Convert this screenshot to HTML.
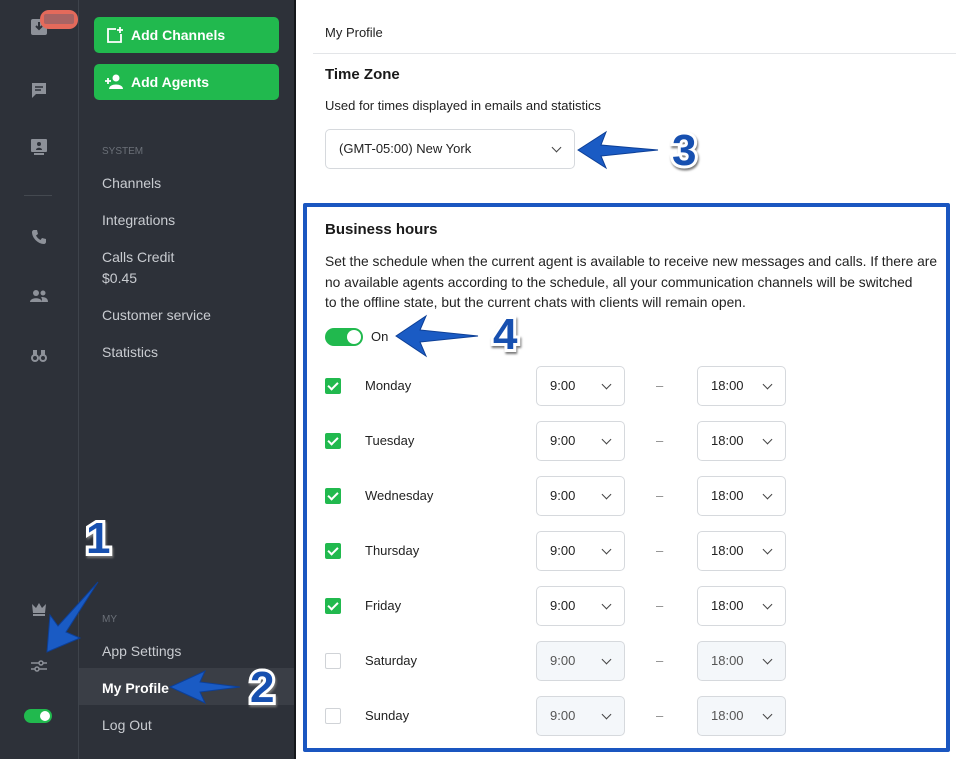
<!DOCTYPE html><html><head><style>
*{box-sizing:border-box;margin:0;padding:0}
body{width:956px;height:759px;overflow:hidden;position:relative;font-family:"Liberation Sans",sans-serif;background:#fff}
.rail{position:absolute;left:0;top:0;width:79px;height:759px;background:#2d3139;border-right:1px solid #3e434b}
.menu{position:absolute;left:79px;top:0;width:217px;height:759px;background:#2d3139;border-right:2px solid #15171b}
.btn{position:absolute;left:15px;width:185px;height:36px;background:#21b94e;border-radius:5px;color:#fff;font-size:14px;font-weight:bold;line-height:36px;padding-left:37px}
.mi{position:absolute;left:23px;color:#c9ccd1;font-size:14px}
.sec{position:absolute;left:23px;color:#6b7078;font-size:10px}
.abs{position:absolute}
.ic{position:absolute;left:30px;width:18px;height:18px;fill:#8d9199}
.t{position:absolute;color:#222;font-size:13px}
.sel{position:absolute;border:1px solid #d6d9dd;border-radius:5px;height:40px;font-size:13px;color:#222;line-height:38px;padding-left:13px;background:#fff}
.sel.d{background:#f4f7fa;color:#555}
.sel::after{content:"";position:absolute;right:14px;top:14px;width:6px;height:6px;border-right:1.5px solid #444;border-bottom:1.5px solid #444;transform:rotate(45deg)}
.cb{position:absolute;left:325px;width:16px;height:16px;border-radius:2px;background:#21b94e}
.cb.off{background:#fff;border:1px solid #d0d3d7}
.cb:not(.off)::after{content:"";position:absolute;left:5px;top:2px;width:4px;height:8px;border-right:2px solid #fff;border-bottom:2px solid #fff;transform:rotate(45deg)}
.num{position:absolute;font-size:44px;font-weight:bold;color:#1750b0;-webkit-text-stroke:6px #fff;paint-order:stroke;filter:drop-shadow(1px 2px 1px #777)}
</style></head><body>
<div class="rail">
<svg class="ic" style="top:18px" viewBox="0 0 18 18"><rect x="1" y="1" width="16" height="16" rx="2"/><path d="M9 4v7M6 8l3 3 3-3" stroke="#2d3139" stroke-width="2" fill="none"/></svg>
<div class="abs" style="left:40px;top:10px;width:38px;height:19px;border-radius:9px;background:#e46a5b"><div style="position:absolute;left:4px;top:4px;width:30px;height:10px;background:#a86464;border-radius:2px"></div></div>
<svg class="ic" style="top:81px" viewBox="0 0 18 18"><path d="M2 2h14v11H6l-4 4z"/><path d="M5 6h8M5 9h6" stroke="#2d3139" stroke-width="1.5"/></svg>
<svg class="ic" style="top:138px" viewBox="0 0 18 18"><rect x="1" y="1" width="16" height="13" rx="1"/><circle cx="9" cy="6" r="2" fill="#2d3139"/><path d="M6 12c0-3 6-3 6 0z" fill="#2d3139"/><rect x="4" y="15" width="10" height="2"/></svg>
<div class="abs" style="left:24px;top:195px;width:28px;height:1px;background:#444950"></div>
<svg class="ic" style="top:228px" viewBox="0 0 18 18"><path d="M4 2l3 0 1 4-2 1.5c1 2 2.5 3.5 4.5 4.5L12 10l4 1v3c0 1-1 2-2 2C8 16 2 10 2 4c0-1 1-2 2-2z"/></svg>
<svg class="ic" style="top:287px" viewBox="0 0 18 18"><circle cx="6" cy="6" r="3"/><circle cx="13" cy="6" r="2.5"/><path d="M0 15c0-5 12-5 12 0zM12 15c0-2 0-4-1-5 4 0 7 1 7 5z"/></svg>
<svg class="ic" style="top:346px" viewBox="0 0 18 18"><circle cx="5" cy="12" r="4"/><circle cx="13" cy="12" r="4"/><rect x="3" y="4" width="4" height="6"/><rect x="11" y="4" width="4" height="6"/><circle cx="5" cy="12" r="2" fill="#2d3139"/><circle cx="13" cy="12" r="2" fill="#2d3139"/></svg>
<svg class="ic" style="top:600px" viewBox="0 0 18 18"><path d="M2 4l4 4 3-5 3 5 4-4-1 9H3z"/><rect x="3" y="14" width="12" height="2"/></svg>
<svg class="ic" style="top:657px" viewBox="0 0 18 18" fill="none" stroke="#8d9199" stroke-width="1.5"><path d="M1 6h16M1 12h16"/><circle cx="11" cy="6" r="2" fill="#2d3139"/><circle cx="7" cy="12" r="2" fill="#2d3139"/></svg>
<div class="abs" style="left:24px;top:709px;width:28px;height:14px;border-radius:7px;background:#21b94e"><div style="position:absolute;right:2px;top:2px;width:10px;height:10px;border-radius:50%;background:#fff"></div></div>
</div>
<div class="menu">
<div class="btn" style="top:17px"><svg class="abs" style="left:12px;top:9px" width="18" height="18" viewBox="0 0 18 18" fill="none" stroke="#fff" stroke-width="1.8"><path d="M10 3H2v13h13V8M14 1v6M11 4h6"/></svg>Add Channels</div>
<div class="btn" style="top:64px"><svg class="abs" style="left:10px;top:10px" width="20" height="16" viewBox="0 0 20 16" fill="#fff"><circle cx="12" cy="4" r="3.5"/><path d="M5 15c0-6 14-6 14 0z"/><path d="M1 7h6M4 4v6" stroke="#fff" stroke-width="1.8"/></svg>Add Agents</div>
<div class="sec" style="top:146px">SYSTEM</div>
<div class="mi" style="top:175px">Channels</div>
<div class="mi" style="top:212px">Integrations</div>
<div class="mi" style="top:249px">Calls Credit</div>
<div class="mi" style="top:270px">$0.45</div>
<div class="mi" style="top:307px">Customer service</div>
<div class="mi" style="top:344px">Statistics</div>
<div class="sec" style="top:614px">MY</div>
<div class="mi" style="top:643px">App Settings</div>
<div class="abs" style="left:0;top:668px;width:215px;height:37px;background:#3a3e46"></div>
<div class="mi" style="top:680px;color:#fff;font-weight:bold">My Profile</div>
<div class="mi" style="top:717px">Log Out</div>
</div>
<div class="t" style="left:325px;top:25px">My Profile</div>
<div class="abs" style="left:313px;top:53px;width:643px;height:1px;background:#e3e5e8"></div>
<div class="t" style="left:325px;top:66px;font-size:15px;font-weight:bold;color:#1a1a1a">Time Zone</div>
<div class="t" style="left:325px;top:98px">Used for times displayed in emails and statistics</div>
<div class="sel" style="left:325px;top:129px;width:250px">(GMT-05:00) New York</div>
<div class="abs" style="left:303px;top:203px;width:647px;height:549px;border:4px solid #1a56c0;border-radius:2px"></div>
<div class="t" style="left:325px;top:221px;font-size:15px;font-weight:bold;color:#1a1a1a">Business hours</div>
<div class="t" style="left:325px;top:252px;line-height:20.5px;white-space:nowrap;font-size:13.8px">Set the schedule when the current agent is available to receive new messages and calls. If there are<br>no available agents according to the schedule, all your communication channels will be switched<br>to the offline state, but the current chats with clients will remain open.</div>
<div class="abs" style="left:325px;top:328px;width:38px;height:18px;border-radius:9px;background:#21b94e"><div style="position:absolute;right:2px;top:2px;width:14px;height:14px;border-radius:50%;background:#fff"></div></div>
<div class="t" style="left:371px;top:329px">On</div>

<div class="cb" style="top:378px"></div><div class="t" style="left:365px;top:378px">Monday</div><div class="sel" style="left:536px;top:366px;width:89px">9:00</div><div class="t" style="left:656px;top:378px;color:#888">–</div><div class="sel" style="left:697px;top:366px;width:89px">18:00</div>
<div class="cb" style="top:433px"></div><div class="t" style="left:365px;top:433px">Tuesday</div><div class="sel" style="left:536px;top:421px;width:89px">9:00</div><div class="t" style="left:656px;top:433px;color:#888">–</div><div class="sel" style="left:697px;top:421px;width:89px">18:00</div>
<div class="cb" style="top:488px"></div><div class="t" style="left:365px;top:488px">Wednesday</div><div class="sel" style="left:536px;top:476px;width:89px">9:00</div><div class="t" style="left:656px;top:488px;color:#888">–</div><div class="sel" style="left:697px;top:476px;width:89px">18:00</div>
<div class="cb" style="top:543px"></div><div class="t" style="left:365px;top:543px">Thursday</div><div class="sel" style="left:536px;top:531px;width:89px">9:00</div><div class="t" style="left:656px;top:543px;color:#888">–</div><div class="sel" style="left:697px;top:531px;width:89px">18:00</div>
<div class="cb" style="top:598px"></div><div class="t" style="left:365px;top:598px">Friday</div><div class="sel" style="left:536px;top:586px;width:89px">9:00</div><div class="t" style="left:656px;top:598px;color:#888">–</div><div class="sel" style="left:697px;top:586px;width:89px">18:00</div>
<div class="cb off" style="top:653px"></div><div class="t" style="left:365px;top:653px">Saturday</div><div class="sel d" style="left:536px;top:641px;width:89px">9:00</div><div class="t" style="left:656px;top:653px;color:#888">–</div><div class="sel d" style="left:697px;top:641px;width:89px">18:00</div>
<div class="cb off" style="top:708px"></div><div class="t" style="left:365px;top:708px">Sunday</div><div class="sel d" style="left:536px;top:696px;width:89px">9:00</div><div class="t" style="left:656px;top:708px;color:#888">–</div><div class="sel d" style="left:697px;top:696px;width:89px">18:00</div>

<svg class="abs" style="left:0;top:0" width="956" height="759">
<g fill="#1a5bc4" stroke="#0d3f96" stroke-width="1">
<polygon points="578,150 606,132 601,145 658,150 601,156 606,168"/>
<polygon points="396,336 426,316 420,330 478,336 420,342 426,356"/>
<polygon points="170,687 205,671 200,682 240,687 200,692 205,703"/>
<polygon points="47,652 50,615 58,626 98,582 66,632 80,638"/>
</g></svg>
<div class="num" style="left:672px;top:126px">3</div>
<div class="num" style="left:493px;top:310px">4</div>
<div class="num" style="left:250px;top:663px">2</div>
<div class="num" style="left:86px;top:514px">1</div>
</body></html>
